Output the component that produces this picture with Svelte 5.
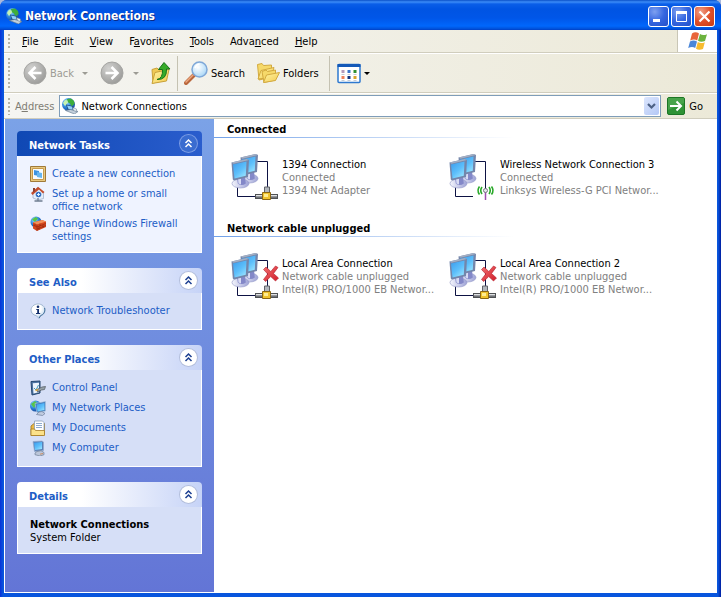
<script>
  let address = $state('Network Connections');

  const menus = [
    { before: '', key: 'F', after: 'ile' },
    { before: '', key: 'E', after: 'dit' },
    { before: '', key: 'V', after: 'iew' },
    { before: 'F', key: 'a', after: 'vorites' },
    { before: '', key: 'T', after: 'ools' },
    { before: 'Adva', key: 'n', after: 'ced' },
    { before: '', key: 'H', after: 'elp' }
  ];

  const panels = [
    {
      title: 'Network Tasks',
      primary: true,
      links: [
        { icon: 'create', text: 'Create a new connection' },
        { icon: 'home', text: 'Set up a home or small office network' },
        { icon: 'firewall', text: 'Change Windows Firewall settings' }
      ]
    },
    {
      title: 'See Also',
      links: [{ icon: 'info', text: 'Network Troubleshooter' }]
    },
    {
      title: 'Other Places',
      links: [
        { icon: 'control', text: 'Control Panel' },
        { icon: 'places', text: 'My Network Places' },
        { icon: 'documents', text: 'My Documents' },
        { icon: 'computer', text: 'My Computer' }
      ]
    },
    {
      title: 'Details',
      details: { name: 'Network Connections', type: 'System Folder' }
    }
  ];

  const groups = [
    {
      title: 'Connected',
      items: [
        { name: '1394 Connection', status: 'Connected', device: '1394 Net Adapter', kind: 'wired' },
        { name: 'Wireless Network Connection 3', status: 'Connected', device: 'Linksys Wireless-G PCI Networ...', kind: 'wireless' }
      ]
    },
    {
      title: 'Network cable unplugged',
      items: [
        { name: 'Local Area Connection', status: 'Network cable unplugged', device: 'Intel(R) PRO/1000 EB Networ...', kind: 'unplugged' },
        { name: 'Local Area Connection 2', status: 'Network cable unplugged', device: 'Intel(R) PRO/1000 EB Networ...', kind: 'unplugged' }
      ]
    }
  ];

  let closed = $state({});

  function toggle(title) {
    closed[title] = !closed[title];
  }
</script>

{#snippet globe()}
  <svg class="icon" viewBox="0 0 16 16" aria-hidden="true">
    <circle cx="6.500" cy="6.500" r="6.500" fill="url(#globe)" />
    <path d="M5 1 9 .6 12 3l.5 3-3 2.500L8 5.500 5.500 4z" fill="#3fae3c" />
    <path d="M1 5 3 2l2.500.5L6 4.500 3 8z" fill="#c5f2b0" />
    <path d="M4 6.500 10.500 8l1.500 5L5.500 11.500z" fill="#1f4f86" />
    <path d="M5 7.500 9.800 8.600l1 3.400L6.300 10.800z" fill="#8fd0fa" />
    <path d="m3.500 12.500 5-1L16 13.500 12.500 16z" fill="#c3cfdb" stroke="#5c738c" stroke-width=".6" />
    <path d="m10.500 9.500 4 1.500v2.500l-3-1z" fill="#e9f0f6" stroke="#65788a" stroke-width=".5" />
  </svg>
{/snippet}

{#snippet taskIcon(name)}
  <svg class="icon" viewBox="0 0 16 16" aria-hidden="true">
    {#if name === 'create'}
      <path d="M.5 .5h15v15H.5z" fill="#e8c980" stroke="#a07a3a" />
      <path d="M2.500 2.500h11v11h-11z" fill="#f6fbff" stroke="#c79a4c" />
      <path d="m4 4 5 1v5L4 9z" fill="#3d93e0" />
      <path d="m7 6 5 1v5l-5-1z" fill="#67b6ef" />
    {:else if name === 'home'}
      <path d="M3 6.500 9 2l4.500 5v5.500L8 14l-5-2z" fill="#e4eefb" stroke="#8e9fba" stroke-width=".6" />
      <path d="M1 7 8 .8 14.500 6l-1.500 1.500L9 3.500 2.500 9z" fill="#c34c2d" />
      <path d="M3 2h2v3L3 6.500z" fill="#8b3f30" />
      <circle cx="8.500" cy="8.500" r="2.800" fill="#3570c3" />
      <path d="M7 8.500h3M8.500 7v3" stroke="#d9f0ff" />
      <path d="M8 12v2.500M4.500 15h8" stroke="#6f7d91" stroke-width="1.300" />
    {:else if name === 'firewall'}
      <circle cx="6" cy="6" r="5.500" fill="url(#globe)" />
      <path d="M2 3.500 5.500 1 8 2.500 5 6z" fill="#58c744" />
      <path d="M3 6.500 12 4l4 1.500V11L7 15l-4-2.500z" fill="#d5461d" />
      <path d="m3 6.500 9-2.500 4 1.500-9 3z" fill="#f29059" />
      <path d="M3 9l4 2 9-3.500M7 8.500V15M10 7.500v2.500M13 9v3M9 10.500v3.500M5 7.500v2.500M7 13l9-3.500" stroke="#7c1f0c" stroke-width=".5" fill="none" />
    {:else if name === 'info'}
      <path d="M8 1c4 0 7 2.500 7 6s-2 5-4.500 5.700L9 15.500l-2.500-2.700C3 12 1 10 1 7s3-6 7-6z" fill="url(#bubble)" stroke="#94adc7" stroke-width=".8" />
      <path d="M14.600 5c.8 4-1 6.500-4 7.600L9.200 15" fill="none" stroke="#416f9b" />
      <circle cx="8" cy="3.800" r="1.300" fill="#13316d" />
      <path d="M6.300 6h2.700v4h1.200v1H6v-1h1.200V7h-.9z" fill="#13316d" />
    {:else if name === 'control'}
      <path d="m1 1.500 9-.5v12l-8 2z" fill="#4c73a3" stroke="#24466f" />
      <path d="m2.800 3.300 6.200-.6v9.500l-5.500 1.300z" fill="#ecf4fc" />
      <path d="m4 8 2 2 2.500-5" fill="none" stroke="#4199bb" />
      <path d="m7 9.500 5-2.500 3.500-.5-1 3-3 .5-4 2z" fill="#96a1a8" stroke="#4d565d" stroke-width=".7" />
      <path d="m5.500 10.500 2.500-1" stroke="#dba236" stroke-width="1.500" />
    {:else if name === 'places'}
      <circle cx="5.500" cy="6" r="5.500" fill="url(#globe)" />
      <path d="M1 4 5 1l2 2-3 5z" fill="#56c44b" />
      <path d="m5 3.500 10.500-2v9.500L7 12.500z" fill="#3d78bd" stroke="#a9c3dc" stroke-width=".7" />
      <path d="m6.500 4.500 8-1.500v7L7.500 11.500z" fill="url(#screen)" />
      <path d="m9 12 3-.5 3 2-2.500 2-6-1z" fill="#c0cbe0" stroke="#6d7c9a" stroke-width=".7" />
    {:else if name === 'documents'}
      <path d="M1 6 4 3.500h10.500V14L13 15.500H1z" fill="#e9b947" stroke="#9b7524" stroke-width=".8" />
      <path d="M4.500 1h8L14 2.500v9H4.500z" fill="#fff" stroke="#8ba0b9" stroke-width=".8" />
      <path d="M6 3.500h6M6 5.500h6M6 7.500h6" stroke="#7195c4" stroke-width=".8" />
      <path d="M1 9h3.500l1 1.500H14.500V15.500H1z" fill="#fbe18a" stroke="#a67b24" stroke-width=".8" />
    {:else}
      <path d="m3 1.500 9-.5 1.500 1v8.500L4.500 11.500z" fill="#5a80b8" stroke="#93abcb" stroke-width=".7" />
      <path d="m4 2.800 8-.8v7L5 10z" fill="url(#screen)" />
      <path d="m7 11.500 4-.8 3 1.800v2.200L10 16l-5-1.300V13z" fill="#bcc6d9" stroke="#6f7f97" stroke-width=".7" />
      <path d="m10 14.200 3-.7" stroke="#ca8d63" />
    {/if}
  </svg>
{/snippet}

{#snippet monitor()}
  <ellipse cx="9.500" cy="25.500" rx="8.500" ry="4.500" fill="url(#base)" stroke="#9499c8" stroke-width=".6" />
  <path d="m6 20 8-1.500.8 7q-4 3-8 0z" fill="#8388c8" />
  <path d="m7 21 3-.5v6l-2.500-1z" fill="#d9dcf4" />
  <path d="M.5 4.500 15.500 1l2.500 1-1 17L3 22.500 1.800 21.500z" fill="#7386ab" />
  <path d="M.5 4.500 15.500 1l2.500 1L2.500 5.800z" fill="#a3afc4" />
  <path d="M2 6.500 15.500 3.500 14.800 17.800 3.500 20.500z" fill="url(#screen)" />
{/snippet}

{#snippet connectionIcon(kind)}
  <svg class="connection-icon" viewBox="0 0 48 48" aria-hidden="true">
    <path d="M26 8.500h10.500V36M6.500 34v9.500H24" fill="none" stroke="#0d1243" />
    <g transform="translate(9 0)">{@render monitor()}</g>
    <g transform="translate(0 5)">{@render monitor()}</g>
    {#if kind === 'wireless'}
      <path d="M36.500 38v9" stroke="#9d4fae" stroke-width="1.500" />
      <circle cx="36.500" cy="37.500" r="2" fill="#e7e7ef" stroke="#77767f" />
      <path d="M33 34q-2.500 3.500 0 7M40 34q2.500 3.500 0 7M30.500 33.500q-3 4 0 8M42.500 33.500q3 4 0 8" fill="none" stroke="#27a827" stroke-width="1.600" />
    {:else}
      <path d="M33.500 34h5v6h-5z" fill="#b2b7bd" stroke="#606369" />
      <path d="M24 41h23v5H24z" fill="#4f5154" />
      <path d="M25 42h21v1.500H25z" fill="#dfe1e3" />
      <path d="M25 43.500h21v1H25z" fill="#93979b" />
      <path d="M31.500 39.500h8v7h-8z" fill="#f0c32e" stroke="#8c6713" />
      <path d="M33 41h4v3h-4z" fill="#ffed91" />
    {/if}
    {#if kind === 'unplugged'}
      <path d="m32.500 17.500 2.500-2.500 4.800 4.500L44.500 14l2.500 1.500-4.500 6 5 4.500-3 3-4.800-4.500-5 5-2.200-2 4.200-5.500z" fill="url(#cross)" stroke="#b21f2b" stroke-width=".6" />
    {/if}
  </svg>
{/snippet}

<!-- shared gradients -->
<svg class="defs" width="0" height="0" aria-hidden="true">
  <defs>
    <radialGradient id="globe" cx=".35" cy=".3" r=".8">
      <stop offset="0" stop-color="#9ddcff" /><stop offset=".5" stop-color="#2e86dc" /><stop offset="1" stop-color="#123a8c" />
    </radialGradient>
    <radialGradient id="bubble" cx=".4" cy=".3" r=".8">
      <stop offset=".4" stop-color="#fff" /><stop offset="1" stop-color="#a8c8e6" />
    </radialGradient>
    <linearGradient id="screen" x1="0" y1="0" x2=".7" y2="1">
      <stop offset="0" stop-color="#3a9bec" /><stop offset=".6" stop-color="#5dbffb" /><stop offset="1" stop-color="#93e0ff" />
    </linearGradient>
    <linearGradient id="base" x1="0" x2="1">
      <stop offset="0" stop-color="#f4f5fc" /><stop offset="1" stop-color="#9da2d6" />
    </linearGradient>
    <linearGradient id="cross" x1="0" y1="0" x2="1" y2="1">
      <stop offset="0" stop-color="#f36f70" /><stop offset="1" stop-color="#cf1c29" />
    </linearGradient>
    <linearGradient id="folder" x1="0" y1="0" x2="1" y2="1">
      <stop offset="0" stop-color="#fff6a6" /><stop offset="1" stop-color="#f3c94e" />
    </linearGradient>
    <radialGradient id="disabled" cx=".35" cy=".3" r=".75">
      <stop offset="0" stop-color="#d2d2d0" /><stop offset="1" stop-color="#9b9b99" />
    </radialGradient>
    <radialGradient id="lens" cx=".4" cy=".35" r=".7">
      <stop offset="0" stop-color="#fff" /><stop offset="1" stop-color="#a5d5f6" />
    </radialGradient>
  </defs>
</svg>

<div class="window">
  <header class="titlebar">
    {@render globe()}
    <h1>Network Connections</h1>
    <button class="caption" aria-label="Minimize">
      <svg viewBox="0 0 21 21"><path d="M5 13h7v3H5z" fill="#fff" /></svg>
    </button>
    <button class="caption" aria-label="Maximize">
      <svg viewBox="0 0 21 21"><path d="M5.500 6h10v9.500h-10z" fill="none" stroke="#fff" /><path d="M5 5h11v3H5z" fill="#fff" /></svg>
    </button>
    <button class="caption close" aria-label="Close">
      <svg viewBox="0 0 21 21"><path d="m5.500 5.500 10 10m0-10-10 10" stroke="#fff" stroke-width="2.200" /></svg>
    </button>
  </header>

  <div class="client">
    <nav class="menubar">
      <span class="grip"></span>
      {#each menus as menu}
        <button class="menu">{menu.before}<u>{menu.key}</u>{menu.after}</button>
      {/each}
      <div class="brand">
        <svg viewBox="0 0 20 20" aria-hidden="true">
          <path d="M4 2.500q3.500-2.500 7 0L9.200 9.500q-3-2-7 0z" fill="#e8643a" />
          <path d="M12 3q3 2 7 .2L17 10q-4 1.500-7-.2z" fill="#6cb33e" />
          <path d="M2 10.500q3.500-2 7 0L7.200 17q-3-2-7 0z" fill="#4a86d8" />
          <path d="M9.800 11q3 2 7 .2L15 18q-4 1.500-7-.2z" fill="#f7bb2f" />
        </svg>
      </div>
    </nav>

    <div class="toolbar">
      <span class="grip"></span>
      <button class="tool back" disabled>
        <svg viewBox="0 0 24 24" class="tool-icon"><circle cx="12" cy="12" r="11" fill="url(#disabled)" stroke="#a5a5a2" /><path d="M18.500 12H7m5.500-6-6 6 6 6" fill="none" stroke="#fff" stroke-width="2.600" /></svg>
        Back
        <span class="caret"></span>
      </button>
      <button class="tool forward" disabled aria-label="Forward">
        <svg viewBox="0 0 24 24" class="tool-icon"><circle cx="12" cy="12" r="11" fill="url(#disabled)" stroke="#a5a5a2" /><path d="M5.500 12H17m-5.500-6 6 6-6 6" fill="none" stroke="#fff" stroke-width="2.600" /></svg>
        <span class="caret"></span>
      </button>
      <button class="tool up" aria-label="Up">
        <svg viewBox="0 0 24 24" class="tool-icon">
          <path d="M3 8.500 8 7l2 2 7-2v12L4 22z" fill="#f0ca55" stroke="#c9a23a" />
          <path d="m3 22.500 3-11 14-3-2.500 11.500z" fill="url(#folder)" stroke="#c9a23a" />
          <path d="M8 18.500q6-1 5.500-10H9.500L15 1.500l6 6.500h-3.500q.5 11-9.500 10.500z" fill="#36ab29" stroke="#16731a" />
        </svg>
      </button>
      <span class="divider"></span>
      <button class="tool search">
        <svg viewBox="0 0 24 24" class="tool-icon">
          <path d="m2 22 8-8" stroke="#b9673c" stroke-width="4" stroke-linecap="round" />
          <path d="m2 21 7-7" stroke="#eda77f" stroke-width="1.500" stroke-linecap="round" />
          <circle cx="15.500" cy="8.500" r="7.500" fill="url(#lens)" stroke="#7fa8d8" stroke-width="1.500" />
          <path d="M11 7q1-3.500 4.500-4" fill="none" stroke="#fff" stroke-width="1.500" />
        </svg>
        Search
      </button>
      <button class="tool folders">
        <svg viewBox="0 0 24 24" class="tool-icon">
          <path d="M1.500 3.500 6 2.500l1.500 2 8-.5v12L3 19z" fill="#f6d969" stroke="#d3aa3f" />
          <path d="m2 18 3-8.500 13-3-3 10z" fill="url(#folder)" stroke="#d3aa3f" />
          <path d="M6 10.500 10 9l1.500 1.500 8-1.500v10L8 21.500z" fill="#f6d969" stroke="#d3aa3f" />
          <path d="m7.500 21.500 3-7.500 13-2.500-4 8z" fill="url(#folder)" stroke="#d3aa3f" />
        </svg>
        Folders
      </button>
      <span class="divider"></span>
      <button class="tool views" aria-label="Views">
        <svg viewBox="0 0 24 24" class="tool-icon">
          <rect x="1" y="3.500" width="22" height="18" rx="1" fill="#fff" stroke="#2e79cf" stroke-width="1.500" />
          <path d="M.5 3h23v3H.5z" fill="#1459b8" />
          <path d="M4.500 9h3v3h-3z" fill="#b59bbb" /><path d="M10.500 9h3v3h-3z" fill="#3c76cc" /><path d="M16.500 9h3v3h-3z" fill="#309131" />
          <path d="M4.500 15h3v3h-3z" fill="#ef825b" /><path d="M10.500 15h3v3h-3z" fill="#14357e" /><path d="M16.500 15h3v3h-3z" fill="#d7a42a" />
          <path d="M4.500 13.500h3m3 0h3m3 0h3M4.500 19.500h3m3 0h3m3 0h3" stroke="#c5ccd5" />
        </svg>
        <span class="caret"></span>
      </button>
    </div>

    <form class="addressbar" onsubmit={(e) => e.preventDefault()}>
      <span class="grip"></span>
      <label for="address">A<u>d</u>dress</label>
      <div class="combo">
        {@render globe()}
        <input id="address" type="text" bind:value={address} />
        <button type="button" class="drop" aria-label="Show addresses">
          <svg viewBox="0 0 15 18"><path d="m4 7 3.500 3.500L11 7" fill="none" stroke="#4d6185" stroke-width="2.200" /></svg>
        </button>
      </div>
      <button class="go">
        <svg viewBox="0 0 18 18" aria-hidden="true">
          <rect x=".5" y=".5" width="17" height="17" rx="1.500" fill="#2f9235" stroke="#1c7625" />
          <path d="M1 1h16v5L1 13z" fill="#5fb45f" opacity=".5" />
          <path d="M3 9h11M9.500 4.500 14 9l-4.500 4.500" fill="none" stroke="#fff" stroke-width="2" />
        </svg>
        Go
      </button>
    </form>

    <div class="content">
      <aside class="sidebar">
        {#each panels as panel}
          <section class="panel" class:primary={panel.primary}>
            <div class="panel-header">
              <h2>{panel.title}</h2>
              <button class="chevron" aria-label="Toggle {panel.title}" onclick={() => toggle(panel.title)}>
                <svg viewBox="0 0 17 17"><path d="m5.500 8 3-3 3 3M5.500 12l3-3 3 3" fill="none" stroke="currentColor" stroke-width="1.500" /></svg>
              </button>
            </div>
            {#if !closed[panel.title]}
              <div class="panel-body">
                {#if panel.details}
                  <p><strong>{panel.details.name}</strong><br />{panel.details.type}</p>
                {:else}
                  {#each panel.links as link}
                    <a href="#top">
                      {@render taskIcon(link.icon)}
                      <span>{link.text}</span>
                    </a>
                  {/each}
                {/if}
              </div>
            {/if}
          </section>
        {/each}
      </aside>

      <main>
        {#each groups as group}
          <section class="group">
            <h2>{group.title}</h2>
            <ul>
              {#each group.items as item}
                <li>
                  {@render connectionIcon(item.kind)}
                  <div class="info">
                    <p class="name">{item.name}</p>
                    <p>{item.status}</p>
                    <p>{item.device}</p>
                  </div>
                </li>
              {/each}
            </ul>
          </section>
        {/each}
      </main>
    </div>
  </div>
</div>

<style>
  :global(body) {
    margin: 0;
    background: #a9b8dc;
  }

  .defs {
    position: absolute;
  }

  .window {
    display: flex;
    flex-direction: column;
    box-sizing: border-box;
    min-height: 100vh;
    padding: 0 4px 4px;
    border-radius: 7px 7px 0 0;
    background: linear-gradient(90deg, #0831d9, #0855dd 3px, #0855dd calc(100% - 3px), #001ea0);
    font-family: Tahoma, 'DejaVu Sans Condensed', 'DejaVu Sans', sans-serif;
    font-size: 11px;
    line-height: 13px;
    color: #000;
  }

  h1, h2, p, ul {
    margin: 0;
    padding: 0;
  }

  button, input {
    margin: 0;
    padding: 0;
    border: none;
    background: none;
    color: inherit;
    font: inherit;
  }

  svg {
    display: block;
    flex: none;
  }

  .icon {
    width: 16px;
    height: 16px;
  }

  .titlebar {
    display: flex;
    align-items: center;
    gap: 2px;
    height: 30px;
    margin: 0 -4px;
    padding: 2px 6px 0;
    box-sizing: border-box;
    border-radius: 7px 7px 0 0;
    background: linear-gradient(#0a50c8, #3c8cf8 2px, #0a5ee8 4px, #0054e3 9px, #0056e8 18px, #0067fc 26px, #0050d8 29px, #003dc4);
  }

  h1 {
    flex: 1;
    padding-left: 1px;
    font-size: 12px;
    line-height: 16px;
    color: #fff;
    text-shadow: 1px 1px #0a2a86;
  }

  .caption {
    width: 21px;
    height: 21px;
    box-sizing: border-box;
    border: 1px solid #fff;
    border-radius: 3px;
    background: radial-gradient(circle at 30% 25%, #7ea0f0, #3566e0 50%, #2450c8);
  }

  .caption svg {
    width: 21px;
    height: 21px;
    margin: -1px;
  }

  .close {
    background: radial-gradient(circle at 30% 25%, #f0a088, #e0502a 50%, #c83a12);
  }

  .client {
    display: flex;
    flex: 1;
    flex-direction: column;
    background: #efeee0;
  }

  .grip {
    flex: none;
    width: 2px;
    align-self: stretch;
    margin: 4px 4px 3px;
    background: repeating-linear-gradient(#b5b3a6 0 2px, transparent 2px 4px);
  }

  .menubar, .toolbar, .addressbar {
    display: flex;
    align-items: center;
    box-sizing: border-box;
    border-bottom: 1px solid #d0cdbd;
    background: linear-gradient(90deg, #f5f5f2, #ece9d8);
  }

  .menubar {
    height: 23px;
  }

  .menu {
    height: 20px;
    padding: 0 8px;
  }

  .brand {
    display: flex;
    align-items: center;
    justify-content: center;
    align-self: stretch;
    width: 39px;
    margin-left: auto;
    border-left: 1px solid #c9c6b6;
    background: #fff;
  }

  .brand svg {
    width: 20px;
    height: 20px;
  }

  .toolbar {
    height: 40px;
    border-top: 1px solid #fff;
  }

  .tool {
    display: flex;
    align-items: center;
    gap: 3px;
    height: 34px;
  }

  .tool-icon {
    width: 24px;
    height: 24px;
  }

  .tool:disabled {
    color: #9c9b94;
  }

  .back {
    padding: 0 12px 0 9px;
  }

  .back .caret {
    margin-left: 5px;
  }

  .forward {
    gap: 9px;
    padding-right: 10px;
  }

  .up {
    padding-right: 4px;
  }

  .search {
    padding: 0 11px 0 6px;
  }

  .folders {
    padding-right: 10px;
  }

  .views {
    padding: 0 7px;
  }

  .caret {
    width: 0;
    border: 3px solid transparent;
    border-top-color: currentColor;
    border-bottom: none;
  }

  .divider {
    width: 1px;
    height: 35px;
    background: #c5c2b2;
  }

  .addressbar {
    height: 26px;
    border-top: 1px solid #fff;
  }

  .addressbar label {
    margin: 0 5px 0 1px;
    color: #7f7d74;
  }

  .combo {
    display: flex;
    flex: 1;
    align-items: center;
    box-sizing: border-box;
    height: 22px;
    padding: 0 1px 0 2px;
    border: 1px solid #7f9db9;
    background: #fff;
  }

  .combo input {
    flex: 1;
    min-width: 0;
    margin-left: 3px;
    outline: none;
  }

  .drop {
    width: 15px;
    height: 18px;
    border-radius: 2px;
    background: linear-gradient(135deg, #dce6fd, #b4c8f6);
  }

  .drop svg {
    width: 15px;
    height: 18px;
  }

  .go {
    display: flex;
    align-items: center;
    gap: 4px;
    margin: 0 14px 0 6px;
  }

  .go svg {
    width: 18px;
    height: 18px;
  }

  .content {
    display: flex;
    flex: 1;
    border: solid #fff;
    border-width: 0 0 1px 1px;
    background: #fff;
  }

  .sidebar {
    display: flex;
    flex: none;
    flex-direction: column;
    gap: 15px;
    box-sizing: border-box;
    width: 209px;
    padding: 12px;
    background: linear-gradient(#7ba2e7, #6375d6);
  }

  .panel-header {
    display: flex;
    align-items: center;
    justify-content: space-between;
    height: 25px;
    padding: 0 5px 0 12px;
    border-radius: 4px 4px 0 0;
    background: linear-gradient(90deg, #fff 35%, #c6d3f7);
    color: #215dc6;
  }

  .panel-header h2 {
    padding-top: 3px;
    font-size: 11px;
    line-height: 13px;
  }

  .primary .panel-header {
    background: linear-gradient(90deg, #0f48b4, #2a5dcd);
    color: #fff;
  }

  .chevron {
    box-sizing: border-box;
    width: 17px;
    height: 17px;
    border-radius: 50%;
    background: #fff;
    box-shadow: 0 0 0 1px #b4bfdc;
    color: #1c3f91;
  }

  .chevron svg {
    width: 17px;
    height: 17px;
  }

  .primary .chevron {
    background: #3a6cd0;
    box-shadow: 0 0 0 1px #7b9ce4;
    color: #fff;
  }

  .panel-body {
    display: flex;
    flex-direction: column;
    gap: 4px;
    padding: 11px 12px 9px;
    border: solid #fff;
    border-width: 0 1px 1px;
    background: #d6dff7;
  }

  .primary .panel-body {
    background: #eff3ff;
  }

  .panel-body a {
    display: flex;
    gap: 6px;
    min-height: 16px;
    color: #215dc6;
    text-decoration: none;
  }

  .panel-body a:hover {
    text-decoration: underline;
  }

  .panel-body .icon {
    margin-top: -1px;
  }

  main {
    flex: 1;
    min-width: 0;
  }

  .group h2 {
    padding: 4px 13px 1px;
    border-bottom: 1px solid;
    border-image: linear-gradient(90deg, #70a0e8, #fff 300px) 1;
    font-size: 11px;
    line-height: 13px;
  }

  .group ul {
    display: grid;
    grid-template-columns: repeat(auto-fill, 218px);
    padding: 15px 0 17px 17px;
    list-style: none;
  }

  .group li {
    display: flex;
    gap: 3px;
    color: #808080;
  }

  .connection-icon {
    width: 48px;
    height: 48px;
  }

  .info {
    padding-top: 5px;
    white-space: nowrap;
  }

  .name {
    color: #000;
  }
</style>
